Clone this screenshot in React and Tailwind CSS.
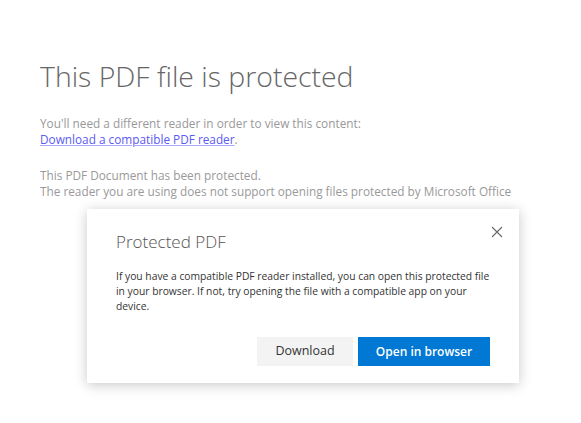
import React from "react";

export default function App() {
  return (
    <div className="relative w-[581px] h-[423px] bg-white overflow-hidden font-['Open_Sans',sans-serif]">
      <div className="pl-[40px] pt-[56px]">
        <h1 className="text-[28.4px] font-light text-[#666] leading-[40px]">This PDF file is protected</h1>
        <div className="mt-[19px] text-[11.8px] leading-[16px] text-[#999]">
          <p>You'll need a different reader in order to view this content:</p>
          <p>
            <a href="#" className="text-[#5b5bf0] underline decoration-[#a9a9f7]">Download a compatible PDF reader</a>.
          </p>
          <p className="mt-[20px]">This PDF Document has been protected.</p>
          <p>The reader you are using does not support opening files protected by Microsoft Office</p>
        </div>
      </div>

      {/* modal */}
      <div className="absolute left-[87px] top-[209px] w-[432px] h-[174px] bg-white shadow-[0_2px_12px_rgba(0,0,0,0.22)] px-[29px] pt-[21px]">
        <button className="absolute right-[16px] top-[17px] text-[#666]">
          <svg width="12" height="12" viewBox="0 0 12 12" stroke="currentColor" strokeWidth="1.1">
            <path d="M1 1L11 11M11 1L1 11" />
          </svg>
        </button>
        <h2 className="text-[17px] font-light text-[#555] leading-[24px]">Protected PDF</h2>
        <p className="mt-[15px] text-[10.3px] leading-[15px] text-[#333]">
          If you have a compatible PDF reader installed, you can open this protected file in your browser. If not, try opening the file with a compatible app on your device.
        </p>
        <div className="mt-[23px] flex justify-end gap-[5px]">
          <button className="w-[96px] h-[29px] bg-[#f3f3f3] text-[12.5px] text-[#333]">Download</button>
          <button className="w-[132px] h-[29px] bg-[#0078d4] text-[12px] font-semibold text-white">Open in browser</button>
        </div>
      </div>
    </div>
  );
}
